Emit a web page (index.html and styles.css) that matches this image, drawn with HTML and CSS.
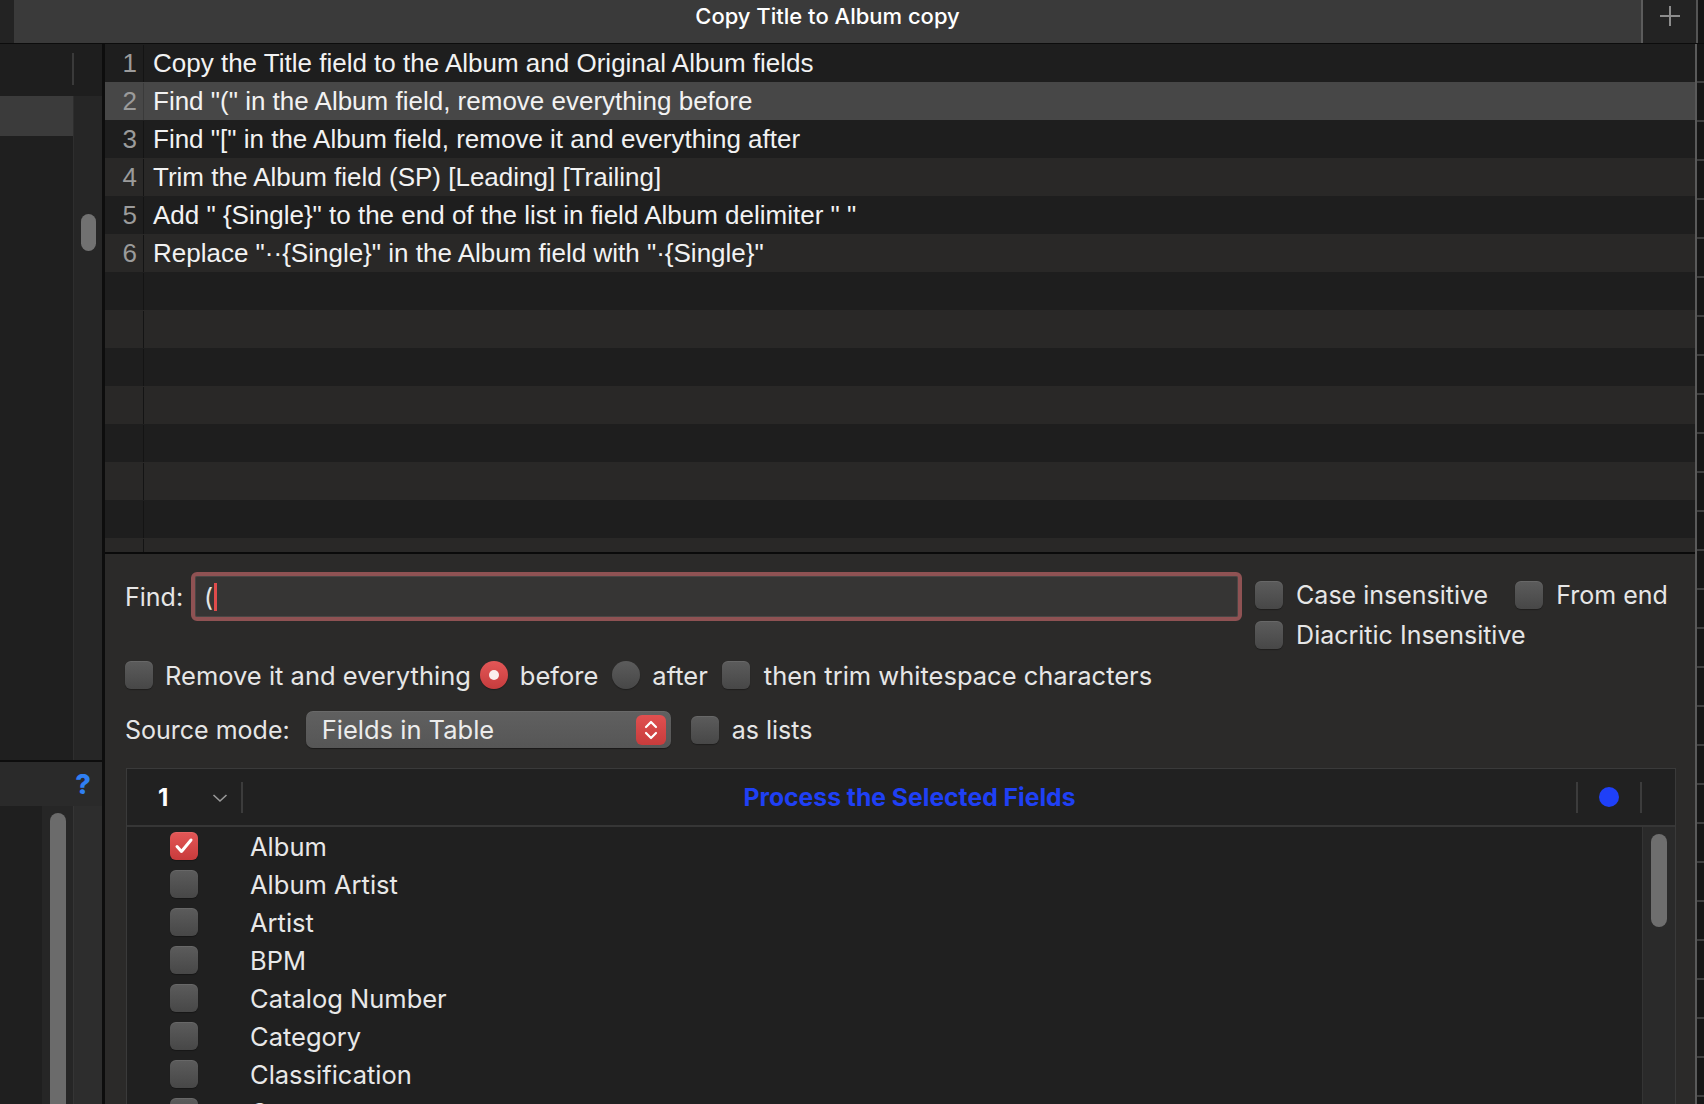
FILE: index.html
```html
<!DOCTYPE html>
<html>
<head>
<meta charset="utf-8">
<link rel="stylesheet" href="styles.css">
</head>
<body>
<div class="window">
  <header class="titlebar">
    <div class="tb-left"></div>
    <div class="tb-title">Copy Title to Album copy</div>
    <div class="tb-add">
      <svg width="22" height="22" viewBox="0 0 22 22"><path d="M11 1v20M1 11h20" stroke="#8c8c8c" stroke-width="2" fill="none"/></svg>
    </div>
    <div class="tb-edge"></div>
  </header>
  <div class="body">
    <aside class="sidebar">
      <div class="sb-head"><span class="sb-sep"></span></div>
      <div class="sb-list">
        <div class="sb-items"><div class="sb-item sel"></div></div>
        <div class="sb-scroll"><div class="sb-thumb"></div></div>
      </div>
      <div class="sb-help">?</div>
      <div class="sb-bottom">
        <div class="sb-b1"></div>
        <div class="sb-b2"><div class="sb-thumb2"></div></div>
        <div class="sb-b3"></div>
      </div>
    </aside>
    <main class="main">
      <div class="steps">
        <div class="step"><span class="num">1</span><span class="txt">Copy the Title field to the Album and Original Album fields</span></div>
        <div class="step sel"><span class="num">2</span><span class="txt">Find "(" in the Album field, remove everything before</span></div>
        <div class="step"><span class="num">3</span><span class="txt">Find "[" in the Album field, remove it and everything after</span></div>
        <div class="step"><span class="num">4</span><span class="txt">Trim the Album field (SP) [Leading] [Trailing]</span></div>
        <div class="step"><span class="num">5</span><span class="txt">Add " {Single}" to the end of the list in field Album delimiter " "</span></div>
        <div class="step"><span class="num">6</span><span class="txt">Replace "··{Single}" in the Album field with "·{Single}"</span></div>
        <div class="step"><span class="num"></span><span class="txt"></span></div>
        <div class="step"><span class="num"></span><span class="txt"></span></div>
        <div class="step"><span class="num"></span><span class="txt"></span></div>
        <div class="step"><span class="num"></span><span class="txt"></span></div>
        <div class="step"><span class="num"></span><span class="txt"></span></div>
        <div class="step"><span class="num"></span><span class="txt"></span></div>
        <div class="step"><span class="num"></span><span class="txt"></span></div>
        <div class="step"><span class="num"></span><span class="txt"></span></div>
      </div>
      <div class="editor">
        <div class="find-row">
          <div class="find-left">
            <span class="label">Find:</span>
            <div class="input"><span class="input-text">(</span><span class="caret"></span></div>
          </div>
          <div class="find-opts">
            <div class="opt-line">
              <span class="cb"></span><span class="label">Case insensitive</span>
              <span class="cb cb-gap"></span><span class="label">From end</span>
            </div>
            <div class="opt-line">
              <span class="cb"></span><span class="label">Diacritic Insensitive</span>
            </div>
          </div>
        </div>
        <div class="remove-row">
          <span class="cb first"></span><span class="label">Remove it and everything</span>
          <span class="radio on"></span><span class="label">before</span>
          <span class="radio"></span><span class="label">after</span>
          <span class="cb"></span><span class="label">then trim whitespace characters</span>
        </div>
        <div class="source-row">
          <span class="label">Source mode:</span>
          <div class="popup">
            <span class="popup-text">Fields in Table</span>
            <span class="stepper">
              <svg width="14" height="22" viewBox="0 0 14 22"><path d="M2 8l5-5 5 5M2 14l5 5 5-5" stroke="#fff" stroke-width="2.2" fill="none" stroke-linecap="round" stroke-linejoin="round"/></svg>
            </span>
          </div>
          <span class="cb"></span><span class="label">as lists</span>
        </div>
        <div class="table">
          <div class="thead">
            <div class="th-num"><span class="th-one">1</span>
              <svg class="chev" width="16" height="10" viewBox="0 0 16 10"><path d="M1.5 2l6.5 6 6.5-6" stroke="#9a9a9a" stroke-width="1.6" fill="none"/></svg>
            </div>
            <div class="th-title">Process the Selected Fields</div>
            <div class="th-dot"><span class="dot"></span></div>
            <div class="th-end"></div>
          </div>
          <div class="tbody">
            <div class="trows">
              <div class="trow"><span class="cb checked"><svg width="20" height="18" viewBox="0 0 20 18"><path d="M3 9.5l4.5 5L17 3" stroke="#fff" stroke-width="3" fill="none" stroke-linecap="round" stroke-linejoin="round"/></svg></span><span class="fname">Album</span></div>
              <div class="trow"><span class="cb"></span><span class="fname">Album Artist</span></div>
              <div class="trow"><span class="cb"></span><span class="fname">Artist</span></div>
              <div class="trow"><span class="cb"></span><span class="fname">BPM</span></div>
              <div class="trow"><span class="cb"></span><span class="fname">Catalog Number</span></div>
              <div class="trow"><span class="cb"></span><span class="fname">Category</span></div>
              <div class="trow"><span class="cb"></span><span class="fname">Classification</span></div>
              <div class="trow"><span class="cb"></span><span class="fname">Comment</span></div>
            </div>
            <div class="tscroll"><div class="tthumb"></div></div>
          </div>
        </div>
      </div>
    </main>
    <div class="edge"><div class="edge-line"></div><div class="edge-strip"></div></div>
  </div>
</div>
</body>
</html>
```

FILE: styles.css
```css
* { box-sizing: border-box; }
html, body { margin: 0; padding: 0; }
body {
  width: 1704px;
  height: 1104px;
  overflow: hidden;
  background: #1e1e1e;
  font-family: Inter, "Noto Sans", sans-serif;
  color: #e6e6e6;
}
.window { display: flex; flex-direction: column; height: 1104px; overflow: hidden; }

/* title bar */
.titlebar {
  height: 44px;
  display: flex;
  border-bottom: 1px solid #0c0c0c;
  flex: none;
}
.tb-left { width: 14px; background: #232323; }
.tb-title {
  flex: 1;
  background: #3a3a3a;
  display: flex;
  align-items: center;
  justify-content: center;
  font-size: 22px;
  font-weight: 500;
  color: #ffffff;
  padding-bottom: 12px;
}
.tb-add {
  width: 55px;
  background: #232323;
  border-left: 2px solid #5c5c5c;
  display: flex;
  align-items: flex-start;
  justify-content: center;
  padding-top: 5px;
}
.tb-edge { width: 8px; background: #151515; border-left: 2px solid #555; }

.body { flex: 1; display: flex; min-height: 0; overflow: hidden; }

/* sidebar */
.sidebar {
  width: 105px;
  border-right: 3px solid #0d0d0d;
  display: flex;
  flex-direction: column;
  flex: none;
  min-height: 0;
  overflow: hidden;
}
.sb-head { height: 52px; background: #1e1e1e; position: relative; flex: none; }
.sb-sep { position: absolute; left: 72px; top: 9px; width: 2px; height: 32px; background: #3a3a3a; }
.sb-list { height: 664px; display: flex; flex: none; }
.sb-items { width: 73px; background: #1f1f1f; }
.sb-item.sel { height: 40px; background: #3b3b3b; }
.sb-scroll { flex: 1; background: #262626; border-left: 1px solid #2e2e2e; padding-top: 118px; padding-left: 7px; }
.sb-thumb { width: 15px; height: 37px; border-radius: 8px; background: #717171; }
.sb-help {
  height: 46px;
  flex: none;
  border-top: 2px solid #0d0d0d;
  background: #2a2a2a;
  display: flex;
  align-items: center;
  justify-content: flex-end;
  padding-right: 11px;
  color: #2f7ff2;
  font-size: 27px;
  font-weight: 800;
}
.sb-bottom { flex: 1; display: flex; min-height: 0; }
.sb-b1 { width: 42px; background: #1f1f1f; }
.sb-b2 { width: 31px; background: #262626; padding-top: 7px; padding-left: 8px; display: flex; flex-direction: column; }
.sb-thumb2 { width: 16px; flex: 1; border-radius: 8px 8px 0 0; background: #6b6b6b; }
.sb-b3 { flex: 1; background: #2d2d2d; border-left: 1px solid #353535; }

/* main */
.main { flex: 1; display: flex; flex-direction: column; min-width: 0; min-height: 0; }
.steps {
  height: 510px;
  flex: none;
  overflow: hidden;
  border-bottom: 2px solid #0a0a0a;
}
.step {
  height: 38px;
  display: flex;
  align-items: center;
  background: #1e1e1e;
  font-family: "Liberation Sans", Arial, sans-serif;
  font-size: 26px;
  color: #f2f2f2;
  padding-top: 1px;
}
.step:nth-child(even) { background: #292827; }
.step.sel { background: #474747; }
.num {
  width: 39px;
  height: 100%;
  display: flex;
  align-items: center;
  justify-content: flex-end;
  padding-right: 6px;
  border-right: 1px solid #141414;
  color: #9b9b9b;
}
.step.sel .num { border-right-color: #3a3a3a; }
.txt { padding-left: 9px; white-space: nowrap; }

/* editor */
.editor {
  flex: 1;
  background: #2b2a29;
  padding: 18px 19px 0 20px;
  overflow: hidden;
  min-height: 0;
  display: flex;
  flex-direction: column;
}
.label { font-size: 25.5px; color: #e6e6e6; white-space: nowrap; }
.find-row { display: flex; align-items: flex-start; height: 77px; flex: none; }
.find-left { display: flex; align-items: center; gap: 8px; }
.find-left .label { font-size: 25px; }
.input {
  width: 1051px;
  height: 49px;
  border: 4px solid #8f5253;
  border-radius: 6px;
  background: #363534;
  box-shadow: inset 0 0 0 1px #4a4645;
  display: flex;
  align-items: center;
  padding-left: 9px;
}
.input-text { font-size: 25px; color: #e6e6e6; }
.caret { width: 3px; height: 28px; background: #e04b4b; margin-left: 1px; }
.find-opts { margin-left: 13px; margin-top: 9px; display: flex; flex-direction: column; gap: 12px; }
.opt-line { display: flex; align-items: center; height: 28px; gap: 13px; }
.opt-line .label { font-size: 25px; }
.cb-gap { margin-left: 14px; }

.cb {
  width: 28px;
  height: 28px;
  flex: none;
  border-radius: 6px;
  background: linear-gradient(#5c5c5c, #474747);
  box-shadow: inset 0 1px 0 rgba(255,255,255,0.08), 0 1px 1px rgba(0,0,0,0.3);
  display: inline-flex;
  align-items: center;
  justify-content: center;
}
.cb.checked { background: linear-gradient(#e35757, #c83b3c); }
.radio {
  width: 28px;
  height: 28px;
  flex: none;
  border-radius: 50%;
  background: linear-gradient(#5c5c5c, #474747);
  box-shadow: 0 1px 1px rgba(0,0,0,0.3);
  display: inline-flex;
  align-items: center;
  justify-content: center;
}
.radio.on { background: linear-gradient(#e35757, #c63c3d); }
.radio.on::after { content: ""; width: 10px; height: 10px; border-radius: 50%; background: #fbeeee; }

.remove-row { display: flex; align-items: center; height: 28px; margin-top: 12px; gap: 14px; flex: none; }
.remove-row .cb.first { margin-right: -2px; }
.remove-row .radio.on { margin-left: -5px; }
.remove-row .radio + .label { margin-left: -2px; }

.source-row { display: flex; align-items: center; height: 37px; margin-top: 22px; flex: none; }
.source-row .label { margin-right: 16px; font-size: 25px; }
.popup {
  width: 365px;
  height: 37px;
  border-radius: 7px;
  background: linear-gradient(#606060, #565656);
  box-shadow: 0 1px 1px rgba(0,0,0,0.4), inset 0 1px 0 rgba(255,255,255,0.06);
  display: flex;
  align-items: center;
  padding-left: 16px;
  padding-right: 5px;
  margin-right: 20px;
}
.popup-text { flex: 1; font-size: 25.5px; color: #ececec; }
.stepper {
  width: 30px;
  height: 30px;
  border-radius: 6px;
  background: linear-gradient(#e05050, #c83c3c);
  display: flex;
  align-items: center;
  justify-content: center;
}
.source-row .cb { margin-right: 13px; }
.source-row .cb + .label { margin-right: 0; }

/* table */
.table {
  margin-top: 20px;
  margin-left: 1px;
  width: 1550px;
  flex: 1;
  min-height: 0;
  border: 1px solid #3a3a3a;
  border-bottom: none;
  background: #202020;
  display: flex;
  flex-direction: column;
}
.thead {
  height: 58px;
  flex: none;
  background: #212121;
  display: flex;
  align-items: center;
  border-bottom: 2px solid #363636;
}
.th-num {
  width: 116px;
  height: 31px;
  border-right: 2px solid #3c3c3c;
  display: flex;
  align-items: center;
  padding-left: 31px;
}
.th-one { font-size: 24px; font-weight: 700; color: #ffffff; }
.chev { margin-left: 44px; margin-top: 2px; }
.th-title {
  flex: 1;
  text-align: center;
  font-size: 24.7px;
  font-weight: 700;
  color: #1f40f5;
}
.th-dot {
  width: 66px;
  height: 31px;
  border-left: 2px solid #3c3c3c;
  border-right: 2px solid #3c3c3c;
  display: flex;
  align-items: center;
  justify-content: center;
}
.dot { width: 20px; height: 20px; border-radius: 50%; background: #1f40f8; }
.th-end { width: 33px; }
.tbody { flex: 1; display: flex; min-height: 0; }
.trows { flex: 1; overflow: hidden; background: #202020; }
.trow { height: 38px; display: flex; align-items: center; padding-left: 43px; }
.fname { margin-left: 52px; font-size: 25.5px; color: #e8e8e8; }
.tscroll { width: 33px; background: #2a2a2a; border-left: 1px solid #343434; padding-top: 7px; padding-left: 8px; }
.tthumb { width: 16px; height: 93px; border-radius: 8px; background: #6e6e6e; }

/* right edge */
.edge { width: 9px; display: flex; flex: none; }
.edge-line { width: 2px; background: #5a5a5a; }
.edge-strip {
  flex: 1;
  background: #161616 repeating-linear-gradient(to bottom, transparent 0 37px, #3e3e3e 37px 39px);
}
```
